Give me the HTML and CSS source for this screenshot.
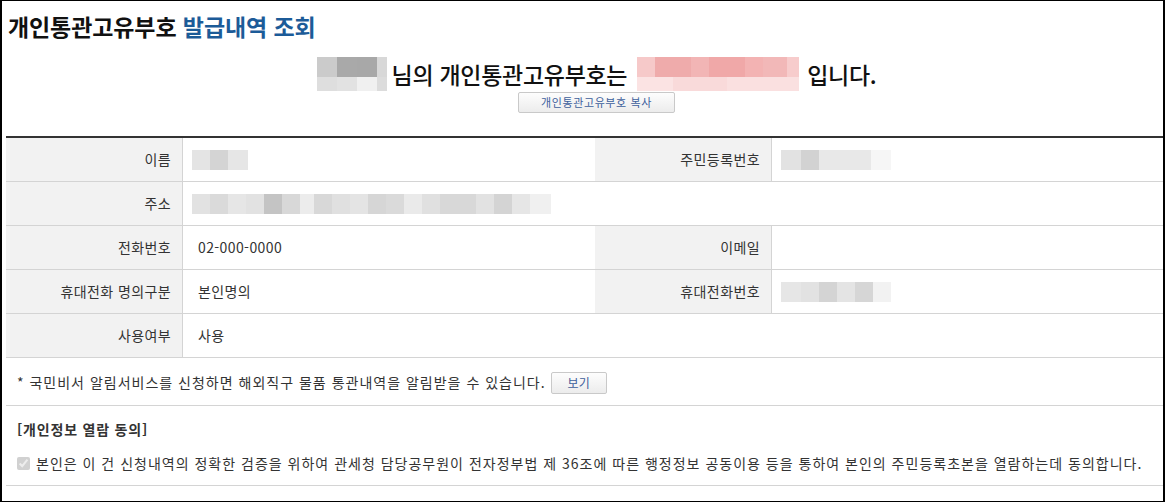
FILE: index.html
```html
<!DOCTYPE html>
<html lang="ko">
<head>
<meta charset="UTF-8">
<meta name="viewport" content="width=device-width, initial-scale=1.0">
<link rel="stylesheet" href="styles.css">
</head>
<body>

<div id="page">
  <h1 class="title">개인통관고유부호 <span class="blue">발급내역 조회</span></h1>

  <div class="result">
    <p class="result-line">
      <span class="mosaic mosaic-name"></span>
      <span>님의 개인통관고유부호는</span>
      <span class="mosaic mosaic-code"></span>
      <span>입니다.</span>
    </p>
    <button class="btn btn-copy">개인통관고유부호 복사</button>
  </div>

  <div class="info">
    <div class="th">이름</div>
    <div class="td"><span class="blur blur-name"></span></div>
    <div class="th">주민등록번호</div>
    <div class="td"><span class="blur blur-rrn"></span></div>

    <div class="th">주소</div>
    <div class="td wide"><span class="blur blur-addr"></span></div>

    <div class="th">전화번호</div>
    <div class="td">02-000-0000</div>
    <div class="th">이메일</div>
    <div class="td"></div>

    <div class="th">휴대전화 명의구분</div>
    <div class="td">본인명의</div>
    <div class="th">휴대전화번호</div>
    <div class="td"><span class="blur blur-mobile"></span></div>

    <div class="th">사용여부</div>
    <div class="td wide">사용</div>
  </div>

  <div class="notice">
    <span>* 국민비서 알림서비스를 신청하면 해외직구 물품 통관내역을 알림받을 수 있습니다.</span>
    <button class="btn btn-view">보기</button>
  </div>

  <div class="agree">
    <h2 class="agree-title">[개인정보 열람 동의]</h2>
    <label class="agree-check">
      <input type="checkbox" checked disabled>
      <span>본인은 이 건 신청내역의 정확한 검증을 위하여 관세청 담당공무원이 전자정부법 제 36조에 따른 행정정보 공동이용 등을 통하여 본인의 주민등록초본을 열람하는데 동의합니다.</span>
    </label>
  </div>
</div>

</body>
</html>
```

FILE: styles.css
```css
body {
  margin: 0;
  background: #fff;
  font-family: "Noto Sans CJK KR", "Noto Sans", sans-serif;
  color: #222;
}

#page {
  width: 1165px;
  height: 502px;
  box-sizing: border-box;
  border: 1px solid #000;
  border-left-width: 2px;
  border-right-width: 2px;
  overflow: hidden;
}

.title {
  margin: 0;
  padding: 10px 0 0 6px;
  height: 32px;
  font-size: 23px;
  line-height: 30px;
  font-weight: 700;
  color: #111;
  letter-spacing: -0.1px;
}

.title .blue {
  color: #1c5b98;
}

.result {
  display: flex;
  flex-direction: column;
  align-items: center;
  padding-top: 14px;
  padding-left: 28px;
  height: 79px;
}

.result-line {
  display: flex;
  align-items: center;
  margin: 0;
  font-size: 23px;
  line-height: 34px;
  font-weight: 500;
  color: #111;
  letter-spacing: -0.3px;
  gap: 5px;
}

.mosaic {
  display: inline-block;
  height: 34px;
}

.mosaic-name {
  width: 70px;
  background:
    linear-gradient(to right, #cbcbcb 0 20px, #a9a9a9 20px 40px, #a8a8a8 40px 60px, #d8d8d8 60px) top / 100% 20px no-repeat,
    linear-gradient(to right, #dedede 0 20px, #e2e2e2 20px 40px, #f0f0f0 40px 60px, #dcdcdc 60px) bottom / 100% 14px no-repeat;
}

.mosaic-code {
  width: 162px;
  margin: 0 3px 0 5px;
  background:
    linear-gradient(to right, #f6c9c9 0 18px, #efabab 18px 54px, #f2b5b5 54px 72px, #f0a8a8 72px 108px, #f3b3b3 108px 126px, #f2b8b8 126px 150px, #f7cccc 150px) top / 100% 20px no-repeat,
    linear-gradient(to right, #fbe3e3 0 36px, #f9dada 36px 90px, #fae0e0 90px) bottom / 100% 14px no-repeat;
}

.btn {
  font-family: inherit;
  border: 1px solid #c9c9c9;
  border-radius: 2px;
  background: linear-gradient(#fdfdfd, #ececec);
  color: #3d5f9c;
  cursor: pointer;
}

.btn-copy {
  margin-top: 1px;
  width: 157px;
  height: 21px;
  padding: 0;
  font-size: 11px;
  line-height: 19px;
  letter-spacing: 0.6px;
}

.info {
  display: grid;
  grid-template-columns: 177px 412px 177px 1fr;
  margin-left: 4px;
  border-top: 2px solid #333;
  font-size: 14px;
  letter-spacing: 0.4px;
  color: #333;
}

.th {
  background: #f2f2f2;
  text-align: right;
  padding-right: 11px;
  height: 43px;
  line-height: 43px;
  border-bottom: 1px solid #d4d4d4;
  border-right: 1px solid #d4d4d4;
}

.td {
  height: 43px;
  line-height: 43px;
  padding-left: 15px;
  border-bottom: 1px solid #d4d4d4;
  display: flex;
  align-items: center;
}

.td.wide {
  grid-column: span 3;
}

.blur {
  display: inline-block;
  height: 20px;
  margin-left: -6px;
}

.blur-name {
  width: 56px;
  background: linear-gradient(to right, #e4e4e4 0 18px, #d4d4d4 18px 36px, #e6e6e6 36px);
}

.blur-rrn {
  width: 110px;
  background: linear-gradient(to right, #e2e2e2 0 20px, #d2d2d2 20px 38px, #e8e8e8 38px 90px, #f6f6f6 90px);
}

.blur-mobile {
  width: 110px;
  background: linear-gradient(to right, #e6e6e6 0 20px, #e2e2e2 20px 38px, #d4d4d4 38px 56px, #e4e4e4 56px 74px, #d6d6d6 74px 92px, #f2f2f2 92px);
}

.blur-addr {
  width: 359px;
  background: linear-gradient(to right,
    #e2e2e2 0 18px, #dadada 18px 36px, #e6e6e6 36px 54px, #e2e2e2 54px 72px,
    #c4c4c4 72px 90px, #d8d8d8 90px 108px, #ececec 108px 122px, #d8d8d8 122px 140px,
    #e0e0e0 140px 158px, #e4e4e4 158px 176px, #d6d6d6 176px 194px, #dadada 194px 212px,
    #eaeaea 212px 230px, #e0e0e0 230px 248px, #d8d8d8 248px 284px, #e2e2e2 284px 302px,
    #d4d4d4 302px 320px, #e6e6e6 320px 338px, #f0f0f0 338px);
}

.notice {
  display: flex;
  align-items: center;
  gap: 5px;
  margin-left: 4px;
  padding-left: 11px;
  height: 47px;
  border-bottom: 1px solid #d4d4d4;
  font-size: 14px;
  letter-spacing: 1px;
  color: #333;
}

.btn-view {
  width: 56px;
  height: 22px;
  padding: 0;
  font-size: 12px;
  letter-spacing: 0;
  margin-top: 2px;
}

.agree {
  margin-left: 4px;
  padding-left: 11px;
  height: 79px;
  border-bottom: 1px solid #d4d4d4;
}

.agree-title {
  margin: 0;
  padding-top: 13px;
  font-size: 14px;
  line-height: 20px;
  font-weight: 700;
  color: #333;
  letter-spacing: 0.8px;
}

.agree-check {
  display: flex;
  align-items: center;
  gap: 6px;
  margin-top: 14px;
  font-size: 14px;
  letter-spacing: 1px;
  color: #333;
}

.agree-check input {
  margin: 0;
  width: 13px;
  height: 13px;
}
```
